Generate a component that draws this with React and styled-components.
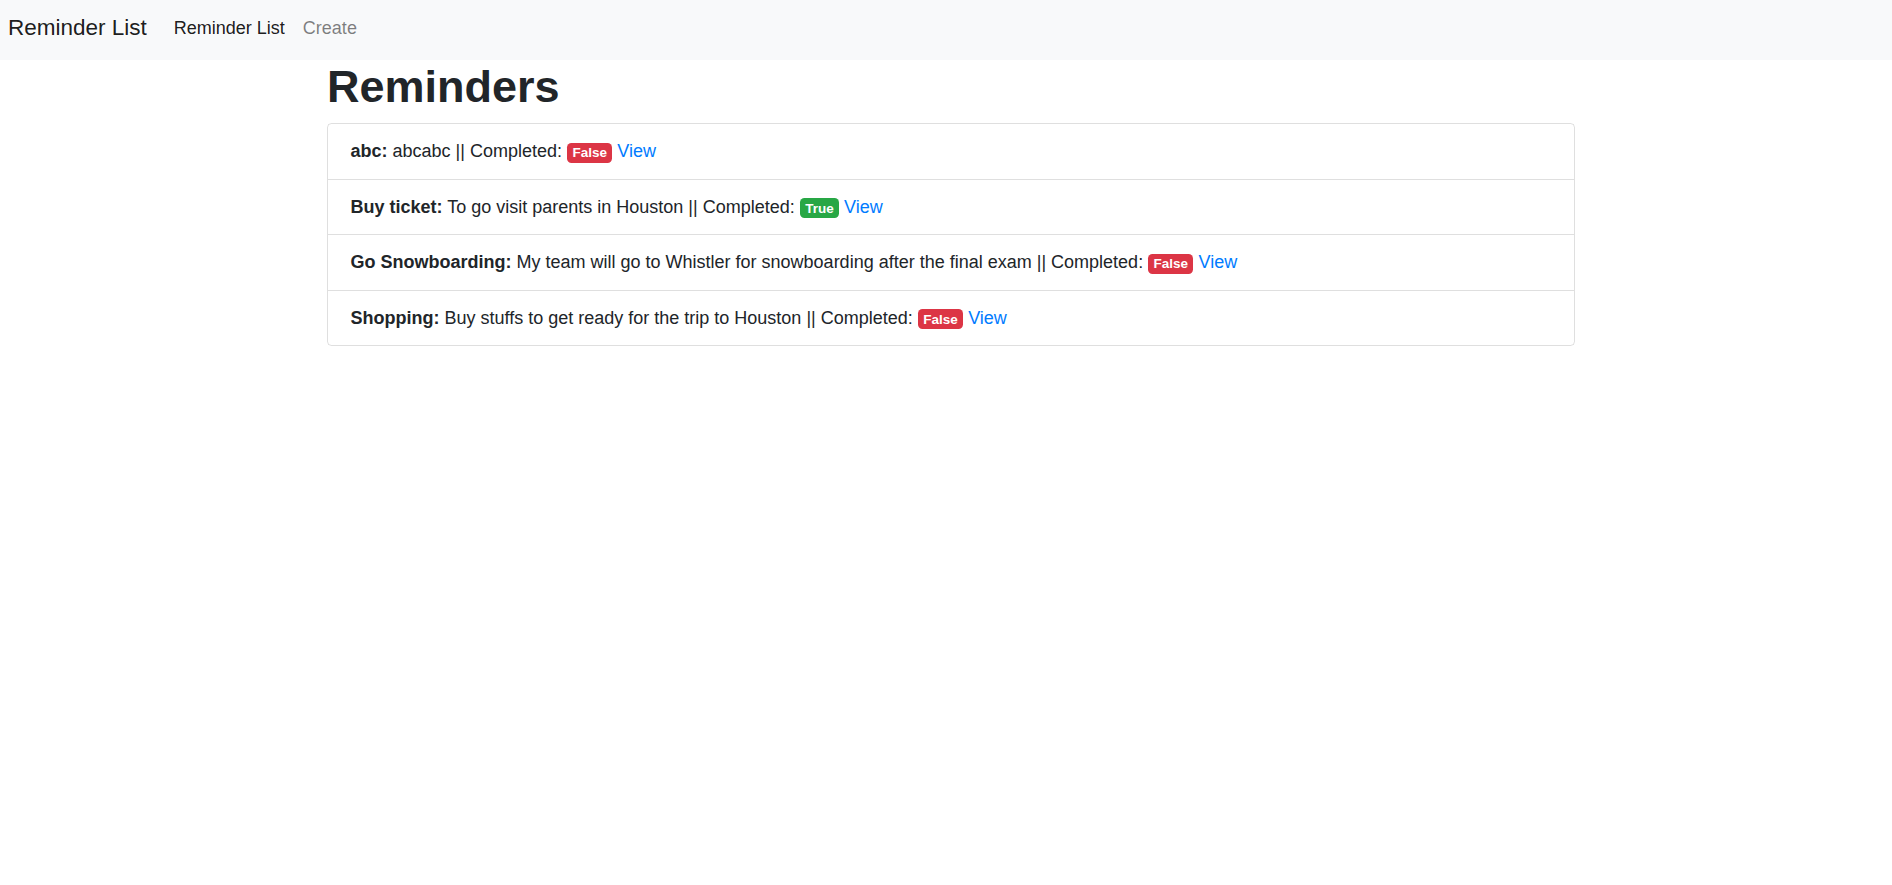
import React from "react";
import styled, { createGlobalStyle } from "styled-components";

const GlobalStyle = createGlobalStyle`
  body {
    margin: 0;
    background: #fff;
    color: #212529;
    font-family: "Liberation Sans", Arial, sans-serif;
    font-size: 18px;
    line-height: 1.5;
  }
`;

const Navbar = styled.nav`
  align-items: center;
  background: #f8f9fa;
  box-sizing: border-box;
  display: flex;
  height: 60px;
  padding: 0 8px 4px;
`;

const Brand = styled.a`
  color: rgba(0, 0, 0, 0.9);
  font-size: 22.5px;
  line-height: 1.5;
  margin-right: 18px;
  text-decoration: none;
`;

const NavLinks = styled.div`
  display: flex;
`;

const NavLink = styled.a`
  color: ${props => (props.active ? "rgba(0, 0, 0, 0.9)" : "rgba(0, 0, 0, 0.5)")};
  font-size: 18px;
  padding: 0 9px;
  text-decoration: none;
`;

const Main = styled.main`
  box-sizing: border-box;
  margin: 0 auto;
  padding-left: 10px;
  width: 1258px;
`;

const Title = styled.h1`
  font-size: 45px;
  font-weight: 700;
  line-height: 1.2;
  margin: 0 0 9px;
`;

const List = styled.ul`
  border: 1px solid rgba(0, 0, 0, 0.125);
  border-radius: 4.5px;
  list-style: none;
  margin: 0;
  padding: 0;
`;

const Item = styled.li`
  line-height: 27px;
  padding: 14px 22.5px 13.5px;
  & + & {
    border-top: 1px solid rgba(0, 0, 0, 0.125);
  }
`;

const Badge = styled.span`
  background: ${props => (props.done ? "#28a745" : "#dc3545")};
  border-radius: 4.5px;
  color: #fff;
  display: inline-block;
  font-size: 13.5px;
  font-weight: 700;
  line-height: 1;
  padding: 3.4px 5.4px;
  vertical-align: baseline;
`;

const ViewLink = styled.a`
  color: #007bff;
  text-decoration: none;
`;

const reminders = [
  { title: "abc", description: "abcabc", completed: false },
  { title: "Buy ticket", description: "To go visit parents in Houston", completed: true },
  {
    title: "Go Snowboarding",
    description: "My team will go to Whistler for snowboarding after the final exam",
    completed: false
  },
  { title: "Shopping", description: "Buy stuffs to get ready for the trip to Houston", completed: false }
];

const App = () => (
  <>
    <GlobalStyle />
    <Navbar>
      <Brand href="#">Reminder List</Brand>
      <NavLinks>
        <NavLink href="#" active>
          Reminder List
        </NavLink>
        <NavLink href="#">Create</NavLink>
      </NavLinks>
    </Navbar>
    <Main>
      <Title>Reminders</Title>
      <List>
        {reminders.map(r => (
          <Item key={r.title}>
            <b>{r.title}:</b> {r.description} || Completed:{" "}
            <Badge done={r.completed}>{r.completed ? "True" : "False"}</Badge>{" "}
            <ViewLink href="#">View</ViewLink>
          </Item>
        ))}
      </List>
    </Main>
  </>
);

export default App;
